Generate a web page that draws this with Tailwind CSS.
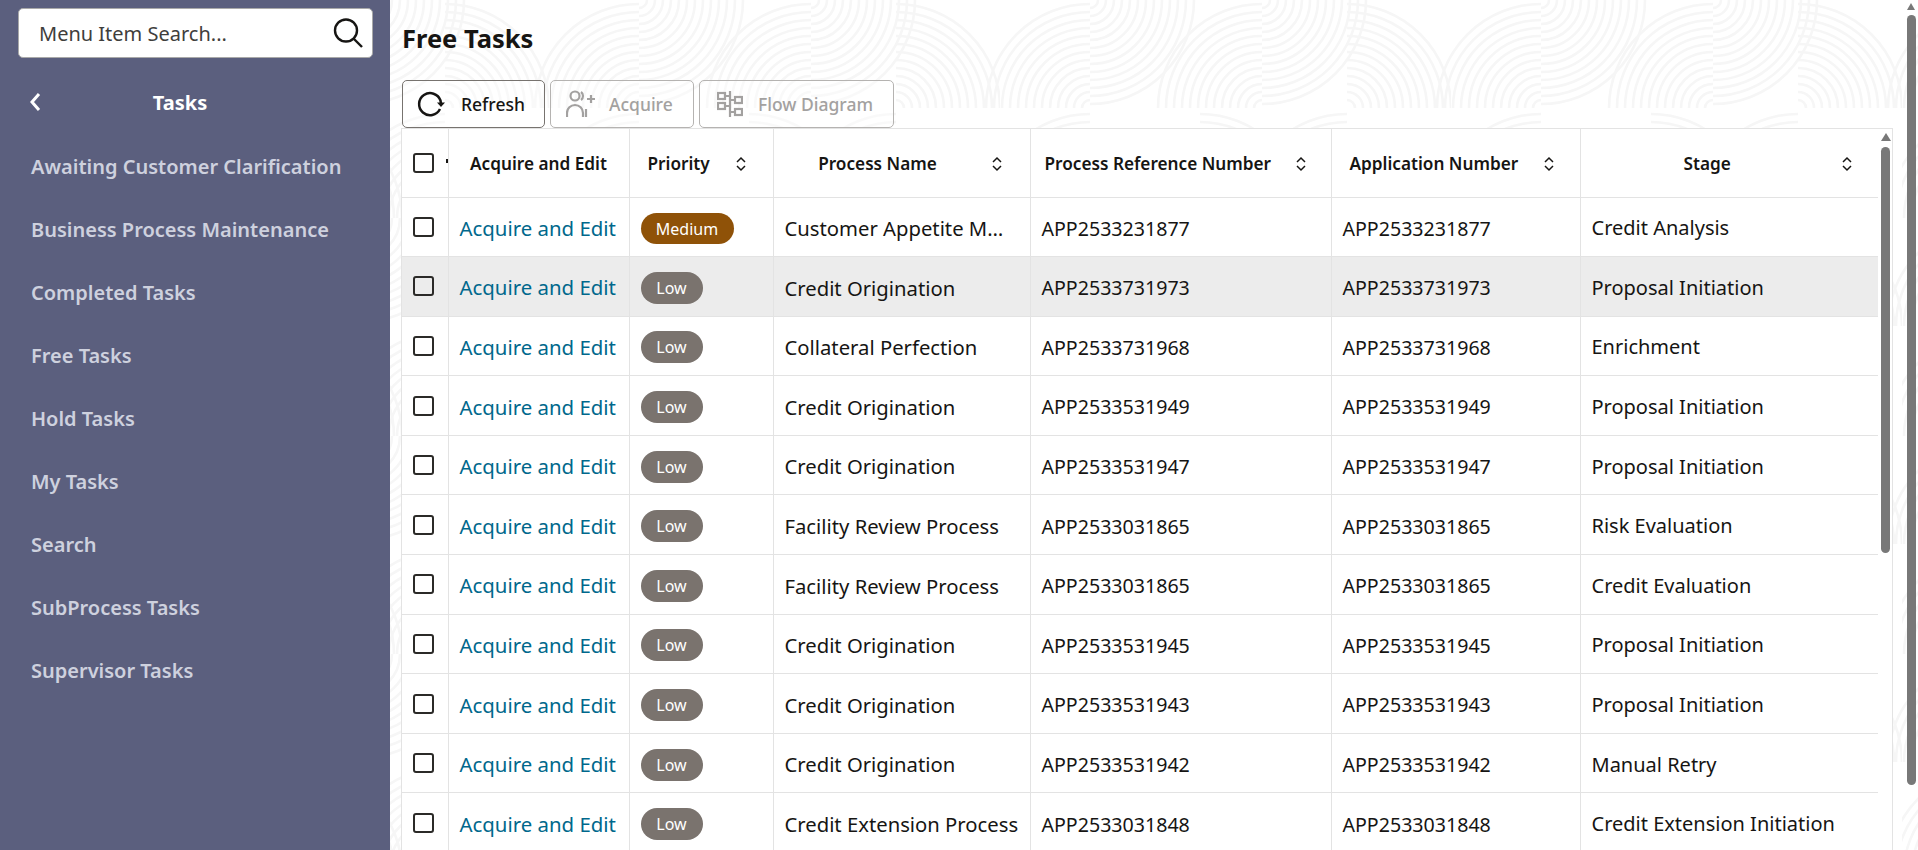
<!DOCTYPE html>
<html lang="en">
<head>
    <meta charset="UTF-8">
    <title>Free Tasks</title>
    <script src="https://cdn.jsdelivr.net/npm/@tailwindcss/browser@4"></script>
</head>
<body class="h-screen overflow-hidden flex bg-white text-[#161513] font-['Noto_Sans',sans-serif]">

<!-- Sidebar -->
<aside class="w-[390px] shrink-0 h-full bg-[#5b5f7e] text-[#ced1de]">
    <div class="pl-[18px] pr-[17px] pt-[8px]">
        <div class="h-[50px] bg-white rounded-[5px] border border-[#a9a9a9] flex items-center justify-between pl-[20px] pr-[8px]">
            <span class="pt-px text-[20px] text-[#3f3e3c]">Menu Item Search...</span>
            <svg class="w-[32px] h-[32px]" viewBox="0 0 32 32" fill="none" stroke="#161513" stroke-width="2.4">
                <circle cx="14" cy="13.5" r="11"/>
                <path d="M22 22 L30 30"/>
            </svg>
        </div>
    </div>
    <div class="relative h-[50px] mt-[20px] flex items-center">
        <svg class="absolute left-[29px] top-[14px] w-[13px] h-[20px]" viewBox="0 0 13 20" fill="none" stroke="white" stroke-width="3">
            <path d="M10 2 L3 10 L10 18"/>
        </svg>
        <span class="w-[360px] text-center text-[20px] font-bold text-white">Tasks</span>
    </div>
    <nav class="mt-[7px] flex flex-col pl-[31px] text-[20px] font-semibold">
        <a class="h-[63px] flex items-center" href="#">Awaiting Customer Clarification</a>
        <a class="h-[63px] flex items-center" href="#">Business Process Maintenance</a>
        <a class="h-[63px] flex items-center" href="#">Completed Tasks</a>
        <a class="h-[63px] flex items-center" href="#">Free Tasks</a>
        <a class="h-[63px] flex items-center" href="#">Hold Tasks</a>
        <a class="h-[63px] flex items-center" href="#">My Tasks</a>
        <a class="h-[63px] flex items-center" href="#">Search</a>
        <a class="h-[63px] flex items-center" href="#">SubProcess Tasks</a>
        <a class="h-[63px] flex items-center" href="#">Supervisor Tasks</a>
    </nav>
</aside>

<!-- Main -->
<main class="relative flex-1 h-full overflow-hidden pl-[12px] pr-[25px]">

    <!-- Background pattern -->
    <svg class="absolute inset-0 w-full h-full" xmlns="http://www.w3.org/2000/svg">
        <defs>
            <g id="arcs" fill="none" stroke="#f6f6f6" stroke-width="2.6">
                <path d="M-8 0 A8 8 0 0 1 0 -8"/>
                <path d="M-16 0 A16 16 0 0 1 0 -16"/>
                <path d="M-24 0 A24 24 0 0 1 0 -24"/>
                <path d="M-32 0 A32 32 0 0 1 0 -32"/>
                <path d="M-40 0 A40 40 0 0 1 0 -40"/>
                <path d="M-48 0 A48 48 0 0 1 0 -48"/>
                <path d="M-56 0 A56 56 0 0 1 0 -56"/>
                <path d="M-64 0 A64 64 0 0 1 0 -64"/>
                <path d="M-72 0 A72 72 0 0 1 0 -72"/>
                <path d="M-80 0 A80 80 0 0 1 0 -80"/>
                <path d="M-88 0 A88 88 0 0 1 0 -88"/>
                <path d="M-96 0 A96 96 0 0 1 0 -96"/>
                <path d="M-104 0 A104 104 0 0 1 0 -104"/>
            </g>
            <pattern id="tile" x="159" y="0" width="451" height="218" patternUnits="userSpaceOnUse">
                <use href="#arcs" transform="translate(90 108)"/>
                <use href="#arcs" transform="translate(90 0) rotate(180)"/>
                <use href="#arcs" transform="translate(262 108)"/>
                <use href="#arcs" transform="translate(262 0) rotate(180)"/>
                <use href="#arcs" transform="translate(347 108) scale(-1 1)"/>
                <use href="#arcs" transform="translate(541 108)"/>
                <use href="#arcs" transform="translate(90 218) scale(-1 1) rotate(90)"/>
                <use href="#arcs" transform="translate(347 218)"/>
                <use href="#arcs" transform="translate(200 218) scale(-1 1)"/>
            </pattern>
        </defs>
        <rect width="100%" height="100%" fill="url(#tile)"/>
    </svg>

    <div class="relative h-[80px] pt-[20px]">
        <h1 class="text-[25.5px] leading-[36px] font-bold">Free Tasks</h1>
    </div>

    <!-- Toolbar -->
    <div class="relative h-[48px] flex gap-[5px]">
        <button class="w-[143px] h-[48px] bg-white/40 rounded-[5px] border border-[#77736f] flex items-center pl-[14px] gap-[16px] text-[17.5px] font-medium">
            <svg class="w-[28px] h-[28px]" viewBox="0 0 28 28" fill="none" stroke="#161513" stroke-width="2.5">
                <path d="M23 19 A11 11 0 1 1 23.5 10.5 L24 14"/>
                <path d="M20 12.5 L24 17 L28 12.5 Z" fill="#161513" stroke="none"/>
            </svg>
            Refresh
        </button>
        <button class="w-[144px] h-[48px] bg-white/40 rounded-[5px] border border-[#b5b3b1] flex items-center pl-[15px] gap-[14px] text-[17.5px] font-medium text-[#a3a1a0]">
            <svg class="w-[29px] h-[28px]" viewBox="0 0 29 28" fill="none" stroke="#a3a1a0" stroke-width="2.2">
                <circle cx="9" cy="6" r="4.5"/>
                <path d="M1 27 V23 A8 8 0 0 1 17 23 V27"/>
                <path d="M15 2 A5 5 0 0 1 15 10"/>
                <path d="M20 19 V27"/>
                <path d="M21 9 H29 M25 5 V13"/>
            </svg>
            Acquire
        </button>
        <button class="w-[195px] h-[48px] bg-white/40 rounded-[5px] border border-[#b5b3b1] flex items-center pl-[17px] gap-[15px] text-[17.5px] font-medium text-[#a3a1a0]">
            <svg class="w-[26px] h-[28px]" viewBox="0 0 26 28" fill="none" stroke="#a3a1a0" stroke-width="2.2">
                <rect x="1" y="3" width="7" height="6"/>
                <rect x="1" y="13" width="7" height="6"/>
                <rect x="18" y="7" width="7" height="6"/>
                <rect x="18" y="19" width="7" height="6"/>
                <path d="M13 1 V27 M8 6 H13 M8 16 H13 M13 10 H18 M13 22 H18"/>
            </svg>
            Flow Diagram
        </button>
    </div>

    <!-- Table -->
    <div class="relative -ml-px h-[723px] overflow-hidden bg-white border border-b-0 border-[#e3e3e3]">
        <table class="w-[1476px] table-fixed border-collapse text-[20px] [&_td]:h-[59.6px] [&_td]:px-[11px] [&_td]:pt-[3px] [&_td]:border-b [&_td]:border-r [&_td]:border-[#e3e3e3] [&_td]:truncate [&_th]:h-[68px] [&_th]:border-b [&_th]:border-r [&_th]:border-[#e3e3e3] [&_th]:text-[17.2px] [&_th]:font-semibold [&_th]:whitespace-nowrap [&_td:last-child]:border-r-0 [&_th:last-child]:border-r-0">
            <colgroup>
                <col class="w-[46px]"><col class="w-[181px]"><col class="w-[144px]"><col class="w-[257px]"><col class="w-[301px]"><col class="w-[249px]"><col class="w-[298px]">
            </colgroup>
            <thead>
                <tr>
                    <th class="pl-[11px] text-left relative">
                        <input type="checkbox" class="block appearance-none w-[21px] h-[20px] bg-white border-2 border-[#2b2a28] rounded-[3px]">
                        <span class="absolute right-0 top-[30px] w-[2px] h-[4px] bg-[#161513]"></span>
                    </th>
                    <th class="text-center pt-[2px]">Acquire and Edit</th>
                    <th class="pt-[2px]">
                        <div class="flex items-center pl-[18px]">
                            <span class="flex-1 text-center">Priority</span>
                            <span class="w-[66px] flex justify-center"><svg class="w-[10px] h-[16px]" viewBox="0 0 10 16" fill="none" stroke="#161513" stroke-width="1.5"><path d="M1 6 L5 2 L9 6 M1 10 L5 14 L9 10"/></svg></span>
                        </div>
                    </th>
                    <th class="pt-[2px]">
                        <div class="flex items-center pl-[18px]">
                            <span class="flex-1 text-center">Process Name</span>
                            <span class="w-[66px] flex justify-center"><svg class="w-[10px] h-[16px]" viewBox="0 0 10 16" fill="none" stroke="#161513" stroke-width="1.5"><path d="M1 6 L5 2 L9 6 M1 10 L5 14 L9 10"/></svg></span>
                        </div>
                    </th>
                    <th class="pt-[2px]">
                        <div class="flex items-center pl-[14px]">
                            <span class="flex-1 text-center">Process Reference Number</span>
                            <span class="w-[66px] flex justify-center"><svg class="w-[10px] h-[16px]" viewBox="0 0 10 16" fill="none" stroke="#161513" stroke-width="1.5"><path d="M1 6 L5 2 L9 6 M1 10 L5 14 L9 10"/></svg></span>
                        </div>
                    </th>
                    <th class="pt-[2px]">
                        <div class="flex items-center pl-[18px]">
                            <span class="flex-1 text-center">Application Number</span>
                            <span class="w-[66px] flex justify-center"><svg class="w-[10px] h-[16px]" viewBox="0 0 10 16" fill="none" stroke="#161513" stroke-width="1.5"><path d="M1 6 L5 2 L9 6 M1 10 L5 14 L9 10"/></svg></span>
                        </div>
                    </th>
                    <th class="pt-[2px]">
                        <div class="flex items-center pl-[18px]">
                            <span class="flex-1 text-center">Stage</span>
                            <span class="w-[62px] flex justify-center"><svg class="w-[10px] h-[16px]" viewBox="0 0 10 16" fill="none" stroke="#161513" stroke-width="1.5"><path d="M1 6 L5 2 L9 6 M1 10 L5 14 L9 10"/></svg></span>
                        </div>
                    </th>
                </tr>
            </thead>
            <tbody class="[&_input]:block [&_input]:appearance-none [&_input]:w-[21px] [&_input]:h-[20px] [&_input]:bg-white [&_input]:border-2 [&_input]:border-[#2b2a28] [&_input]:rounded-[3px] [&_a]:text-[#00688c] [&_a]:text-[20.4px] [&_td:nth-child(4)]:text-[20.25px] [&_td:nth-child(5)]:text-[19.6px] [&_td:nth-child(6)]:text-[19.6px] [&_td:first-child]:!pt-0 [&_td:first-child]:!pl-[11px]">
                <tr>
                    <td><input type="checkbox"></td>
                    <td><a href="#">Acquire and Edit</a></td>
                    <td><span class="inline-flex items-center justify-center w-[93px] h-[31px] rounded-full bg-[#8f5208] text-white text-[16px]">Medium</span></td>
                    <td class="!pr-[20px]">Customer Appetite Monitoring</td>
                    <td>APP2533231877</td>
                    <td>APP2533231877</td>
                    <td>Credit Analysis</td>
                </tr>
                <tr class="bg-[#ececec]">
                    <td><input type="checkbox" class="!bg-[#ececec]"></td>
                    <td><a href="#">Acquire and Edit</a></td>
                    <td><span class="inline-flex items-center justify-center w-[62px] h-[32px] rounded-full bg-[#7a736e] text-white text-[16px]">Low</span></td>
                    <td>Credit Origination</td>
                    <td>APP2533731973</td>
                    <td>APP2533731973</td>
                    <td>Proposal Initiation</td>
                </tr>
                <tr>
                    <td><input type="checkbox"></td>
                    <td><a href="#">Acquire and Edit</a></td>
                    <td><span class="inline-flex items-center justify-center w-[62px] h-[32px] rounded-full bg-[#7a736e] text-white text-[16px]">Low</span></td>
                    <td>Collateral Perfection</td>
                    <td>APP2533731968</td>
                    <td>APP2533731968</td>
                    <td>Enrichment</td>
                </tr>
                <tr>
                    <td><input type="checkbox"></td>
                    <td><a href="#">Acquire and Edit</a></td>
                    <td><span class="inline-flex items-center justify-center w-[62px] h-[32px] rounded-full bg-[#7a736e] text-white text-[16px]">Low</span></td>
                    <td>Credit Origination</td>
                    <td>APP2533531949</td>
                    <td>APP2533531949</td>
                    <td>Proposal Initiation</td>
                </tr>
                <tr>
                    <td><input type="checkbox"></td>
                    <td><a href="#">Acquire and Edit</a></td>
                    <td><span class="inline-flex items-center justify-center w-[62px] h-[32px] rounded-full bg-[#7a736e] text-white text-[16px]">Low</span></td>
                    <td>Credit Origination</td>
                    <td>APP2533531947</td>
                    <td>APP2533531947</td>
                    <td>Proposal Initiation</td>
                </tr>
                <tr>
                    <td><input type="checkbox"></td>
                    <td><a href="#">Acquire and Edit</a></td>
                    <td><span class="inline-flex items-center justify-center w-[62px] h-[32px] rounded-full bg-[#7a736e] text-white text-[16px]">Low</span></td>
                    <td>Facility Review Process</td>
                    <td>APP2533031865</td>
                    <td>APP2533031865</td>
                    <td>Risk Evaluation</td>
                </tr>
                <tr>
                    <td><input type="checkbox"></td>
                    <td><a href="#">Acquire and Edit</a></td>
                    <td><span class="inline-flex items-center justify-center w-[62px] h-[32px] rounded-full bg-[#7a736e] text-white text-[16px]">Low</span></td>
                    <td>Facility Review Process</td>
                    <td>APP2533031865</td>
                    <td>APP2533031865</td>
                    <td>Credit Evaluation</td>
                </tr>
                <tr>
                    <td><input type="checkbox"></td>
                    <td><a href="#">Acquire and Edit</a></td>
                    <td><span class="inline-flex items-center justify-center w-[62px] h-[32px] rounded-full bg-[#7a736e] text-white text-[16px]">Low</span></td>
                    <td>Credit Origination</td>
                    <td>APP2533531945</td>
                    <td>APP2533531945</td>
                    <td>Proposal Initiation</td>
                </tr>
                <tr>
                    <td><input type="checkbox"></td>
                    <td><a href="#">Acquire and Edit</a></td>
                    <td><span class="inline-flex items-center justify-center w-[62px] h-[32px] rounded-full bg-[#7a736e] text-white text-[16px]">Low</span></td>
                    <td>Credit Origination</td>
                    <td>APP2533531943</td>
                    <td>APP2533531943</td>
                    <td>Proposal Initiation</td>
                </tr>
                <tr>
                    <td><input type="checkbox"></td>
                    <td><a href="#">Acquire and Edit</a></td>
                    <td><span class="inline-flex items-center justify-center w-[62px] h-[32px] rounded-full bg-[#7a736e] text-white text-[16px]">Low</span></td>
                    <td>Credit Origination</td>
                    <td>APP2533531942</td>
                    <td>APP2533531942</td>
                    <td>Manual Retry</td>
                </tr>
                <tr>
                    <td><input type="checkbox"></td>
                    <td><a href="#">Acquire and Edit</a></td>
                    <td><span class="inline-flex items-center justify-center w-[62px] h-[32px] rounded-full bg-[#7a736e] text-white text-[16px]">Low</span></td>
                    <td class="!pr-[4px]">Credit Extension Process</td>
                    <td>APP2533031848</td>
                    <td>APP2533031848</td>
                    <td>Credit Extension Initiation</td>
                </tr>
            </tbody>
        </table>

        <!-- Table scrollbar -->
        <div class="absolute right-[1px] top-[4px] w-[10px] h-[421px]">
            <div class="mx-auto w-0 h-0 border-x-[5px] border-x-transparent border-b-[8px] border-b-[#787878]"></div>
            <div class="mt-[6px] w-[9px] h-[406px] rounded-full bg-[#787878]"></div>
        </div>
    </div>

    <!-- Page scrollbar -->
    <div class="absolute right-[2px] top-[3px] w-[9px]">
        <div class="w-0 h-0 border-x-[4.5px] border-x-transparent border-b-[7px] border-b-[#787878]"></div>
        <div class="mt-[5px] w-[9px] h-[770px] rounded-full bg-[#787878]"></div>
    </div>
</main>

</body>
</html>
